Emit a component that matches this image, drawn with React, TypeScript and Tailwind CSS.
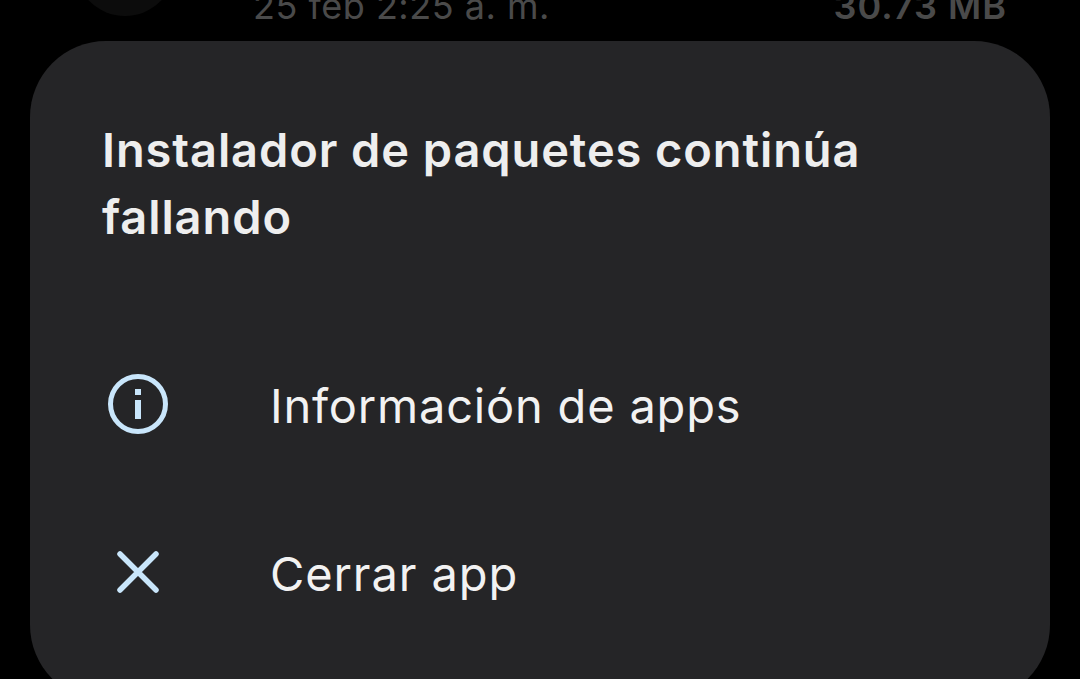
const App = () => {
  return (
    <div className="h-[679px] w-[1080px] overflow-hidden bg-black font-['Inter',sans-serif]">
      <div className="flex h-[41px] items-start overflow-hidden pl-[75px] pr-[73px]">
        <div className="mr-[78px] mt-[-84px] h-[100px] w-[100px] shrink-0 rounded-full bg-[#0c0c0c]" />
        <span className="mt-[-14px] text-[36px] leading-[40px] tracking-[0.5px] text-[#4a4a4a]">25 feb 2:25 a. m.</span>
        <span className="ml-auto mt-[-14px] text-[36px] font-semibold leading-[40px] tracking-[1px] text-[#4a4a4a]">30.73 MB</span>
      </div>

      <div className="mx-[30px] h-[660px] rounded-[76px] bg-[#252527] pl-[73px] pt-[75px]">
        <h1 className="ml-[-1px] w-[800px] text-[47px] font-semibold leading-[67px] tracking-[0.9px] text-[#eeeeee]">
          Instalador de paquetes continúa fallando
        </h1>

        <div className="mt-[116px] flex h-[80px] items-center">
          <svg width="60" height="60" viewBox="0 0 60 60" fill="none" className="ml-[5px] mt-[-4px] shrink-0 text-[#c9e6fb]">
            <circle cx="30" cy="30" r="27.5" stroke="currentColor" strokeWidth="5" />
            <rect x="27" y="15" width="6" height="6" fill="currentColor" />
            <rect x="27" y="26" width="6" height="19" fill="currentColor" />
          </svg>
          <span className="ml-[102px] text-[47px] leading-[60px] tracking-[0.8px] text-[#f2f2f2]">Información de apps</span>
        </div>

        <div className="mt-[88px] flex h-[80px] items-center">
          <svg width="60" height="60" viewBox="0 0 60 60" fill="none" className="ml-[5px] mt-[-4px] shrink-0 text-[#c9e6fb]">
            <path d="M12 12 L48 48 M48 12 L12 48" stroke="currentColor" strokeWidth="5.5" strokeLinecap="round" />
          </svg>
          <span className="ml-[102px] text-[47px] leading-[60px] tracking-[0.9px] text-[#f2f2f2]">Cerrar app</span>
        </div>
      </div>
    </div>
  );
};

export default App;
